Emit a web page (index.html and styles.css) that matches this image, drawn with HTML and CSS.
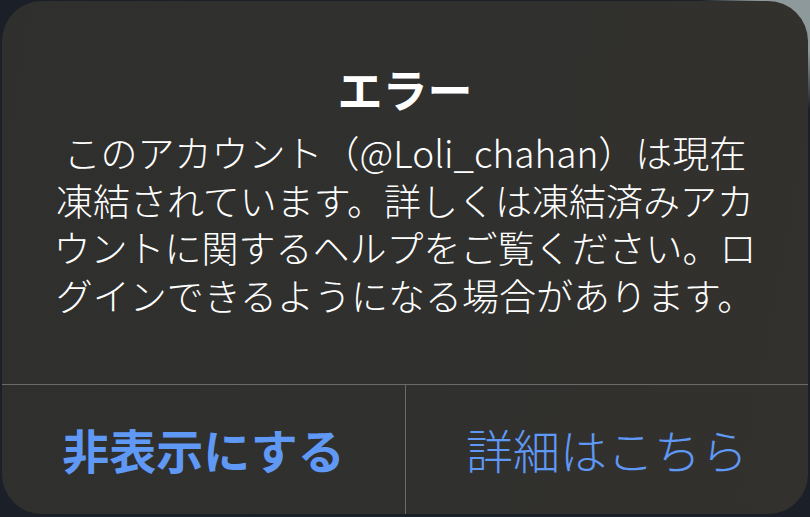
FILE: index.html
```html
<!DOCTYPE html>
<html lang="ja">
<head>
<meta charset="UTF-8">
<meta name="viewport" content="width=device-width, initial-scale=1.0">
<title>エラー</title>
<link rel="stylesheet" href="styles.css">
</head>
<body>
<div class="alert">
    <div class="alert-body">
        <h1 class="alert-title">エラー</h1>
        <p class="alert-msg">このアカウント（@Loli_chahan）は現在<br>凍結されています。詳しくは凍結済みアカ<br>ウントに関するヘルプをご覧ください。ロ<br>グインできるようになる場合があります。</p>
    </div>
    <div class="alert-actions">
        <a href="javascript:;" class="btn btn-main">非表示にする</a>
        <a href="javascript:;" class="btn">詳細はこちら</a>
    </div>
</div>
</body>
</html>
```

FILE: styles.css
```css
html, body {
    margin: 0;
    height: 100%;
}
body {
    box-sizing: border-box;
    padding: 1px 2px 3px 2px;
    background: radial-gradient(circle at 100% 0, #8e999b 0, #8e999b 50px, #1b1f27 110px);
    font-family: "Noto Sans CJK JP", "Noto Sans", sans-serif;
    overflow: hidden;
}
.alert {
    display: flex;
    flex-direction: column;
    height: 100%;
    border-radius: 40px;
    background: linear-gradient(100deg, #2f2f2e 0%, #30302e 60%, #33312d 100%);
    color: #fff;
    overflow: hidden;
}
.alert-body {
    height: 383px;
    padding-top: 61px;
    box-sizing: border-box;
    text-align: center;
}
.alert-title {
    margin: 0;
    font-size: 45px;
    line-height: 54px;
    font-weight: 700;
}
.alert-msg {
    margin: 13px 0 0;
    font-size: 37px;
    line-height: 47.5px;
    font-weight: 300;
}
.alert-actions {
    flex: 1;
    display: grid;
    grid-template-columns: 1fr 1fr;
    border-top: 1px solid #6b6b6b;
}
.btn {
    display: flex;
    align-items: center;
    justify-content: center;
    padding-bottom: 2px;
    font-size: 47px;
    font-weight: 300;
    color: #5f98f5;
    text-decoration: none;
}
.btn + .btn {
    border-left: 1px solid #6b6b6b;
}
.btn-main {
    font-weight: 700;
}
```
